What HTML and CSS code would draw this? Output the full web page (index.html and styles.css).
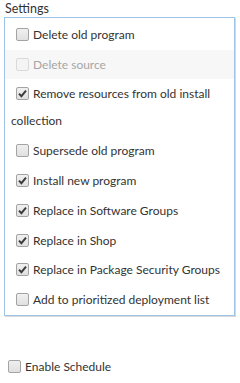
FILE: index.html
```html
<!DOCTYPE html>
<html>
<head>
<meta charset="utf-8">
<link rel="stylesheet" href="styles.css">
</head>
<body>
<div class="group-label">Settings</div>
<div class="group">
  <div class="row"><span class="cb"></span>Delete old program</div>
  <div class="row disabled"><span class="cb"></span>Delete source</div>
  <div class="row wrap"><span class="cb checked"><svg viewBox="0 0 13 13" width="13" height="13"><path d="M3 6.6 L5.4 9.2 L10 3.6" fill="none" stroke="#3a3a3a" stroke-width="1.9"/></svg></span>Remove resources from old install collection</div>
  <div class="row"><span class="cb"></span>Supersede old program</div>
  <div class="row"><span class="cb checked"><svg viewBox="0 0 13 13" width="13" height="13"><path d="M3 6.6 L5.4 9.2 L10 3.6" fill="none" stroke="#3a3a3a" stroke-width="1.9"/></svg></span>Install new program</div>
  <div class="row"><span class="cb checked"><svg viewBox="0 0 13 13" width="13" height="13"><path d="M3 6.6 L5.4 9.2 L10 3.6" fill="none" stroke="#3a3a3a" stroke-width="1.9"/></svg></span>Replace in Software Groups</div>
  <div class="row"><span class="cb checked"><svg viewBox="0 0 13 13" width="13" height="13"><path d="M3 6.6 L5.4 9.2 L10 3.6" fill="none" stroke="#3a3a3a" stroke-width="1.9"/></svg></span>Replace in Shop</div>
  <div class="row"><span class="cb checked"><svg viewBox="0 0 13 13" width="13" height="13"><path d="M3 6.6 L5.4 9.2 L10 3.6" fill="none" stroke="#3a3a3a" stroke-width="1.9"/></svg></span>Replace in Package Security Groups</div>
  <div class="row"><span class="cb"></span>Add to prioritized deployment list</div>
</div>
<div class="schedule"><span class="cb"></span>Enable Schedule</div>
</body>
</html>
```
FILE: styles.css
```css
html, body {
  margin: 0;
  padding: 0;
  background: #ffffff;
}
body {
  width: 240px;
  height: 383px;
  font-family: Lato, "Open Sans", sans-serif;
  font-size: 12px;
  color: #333333;
  overflow: hidden;
}
.group-label {
  padding-left: 5px;
  height: 17px;
  line-height: 17px;
  font-size: 12.5px;
}
.group {
  margin-left: 4px;
  width: 231px;
  border: 1px solid #9dc3e6;
  box-shadow: 1px 1px 0 #d9d9d9;
  padding-top: 2px;
  box-sizing: border-box;
}
.row {
  padding: 2px 6px;
  line-height: 25.7px;
}
.row.wrap {
  line-height: 26.5px;
}
.row.disabled {
  background: #f7f7f7;
  color: #a6a6a6;
}
.cb {
  display: inline-block;
  width: 13px;
  height: 13px;
  box-sizing: border-box;
  border: 1px solid #a3a3a3;
  border-radius: 2px;
  background: linear-gradient(#f0f0f0, #e0e0e0);
  vertical-align: -2px;
  margin-left: 5px;
  margin-right: 4px;
  position: relative;
}
.cb svg {
  position: absolute;
  left: -1px;
  top: -1px;
}
.disabled .cb {
  border-color: #dadada;
  background: #f4f4f4;
}
.schedule {
  margin-top: 38px;
  padding-left: 3px;
  line-height: 26px;
}
```
